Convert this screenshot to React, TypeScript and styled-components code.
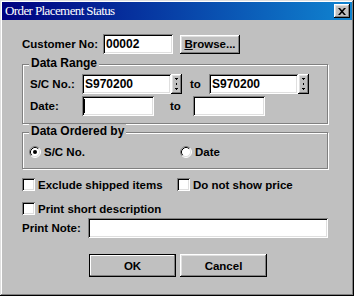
import React from 'react'
import styled, { createGlobalStyle } from 'styled-components'

const GlobalStyle = createGlobalStyle`
    html, body {
        margin: 0;
        padding: 0;
        background: #c0c0c0;
    }
    body {
        font-family: "Liberation Sans", Arial, sans-serif;
        color: #000;
    }
`

const raised = `
    box-shadow: inset -1px -1px #000, inset 1px 1px #fff, inset -2px -2px #808080, inset 2px 2px #dfdfdf;
`

const sunken = `
    box-shadow: inset 1px 1px #808080, inset -1px -1px #fff, inset 2px 2px #000, inset -2px -2px #dfdfdf;
`

const Window = styled.div`
    box-sizing: border-box;
    width: 354px;
    height: 296px;
    padding: 2px;
    background: #c0c0c0;
    box-shadow: inset -1px -1px #000, inset 1px 1px #dfdfdf, inset -2px -2px #808080, inset 2px 2px #fff;
`

const TitleBar = styled.div`
    height: 18px;
    display: flex;
    align-items: center;
    justify-content: space-between;
    padding-left: 3px;
    background: linear-gradient(to right, #000080, #1084d0);
`

const TitleText = styled.span`
    font-family: "Liberation Serif", "Times New Roman", serif;
    font-size: 13px;
    letter-spacing: -0.6px;
    color: #fff;
    line-height: 18px;
`

const CloseButton = styled.div`
    width: 16px;
    height: 14px;
    margin-right: 2px;
    display: flex;
    align-items: center;
    justify-content: center;
    background: #c0c0c0;
    ${raised}
`

const Body = styled.div`
    padding: 14px 24px 0 20px;
    font-size: 11.5px;
    font-weight: bold;
`

type RowProps = { $mt?: number; $h?: number; $pl?: number }

const Row = styled.div<RowProps>`
    display: flex;
    align-items: center;
    margin-top: ${({ $mt }) => $mt ?? 0}px;
    padding-left: ${({ $pl }) => $pl ?? 0}px;
    height: ${({ $h }) => $h ?? 20}px;
`

const Label = styled.span<{ $w: number; $ml?: number; $pl?: number }>`
    box-sizing: border-box;
    width: ${({ $w }) => $w}px;
    margin-left: ${({ $ml }) => $ml ?? 0}px;
    padding-left: ${({ $pl }) => $pl ?? 0}px;
    flex: none;
    white-space: nowrap;
`

const TextBox = styled.div<{ $w: number }>`
    box-sizing: border-box;
    width: ${({ $w }) => $w}px;
    height: 20px;
    padding: 0 3px;
    flex: none;
    display: flex;
    align-items: center;
    background: #fff;
    font-size: 12px;
    font-weight: bold;
    ${sunken}
`

const Caret = styled.span`
    width: 1px;
    height: 14px;
    margin-left: -1px;
    background: #000;
`

const PushButton = styled.div<{ $w: number; $h: number; $ml?: number; $default?: boolean }>`
    box-sizing: border-box;
    width: ${({ $w }) => $w}px;
    height: ${({ $h }) => $h}px;
    margin-left: ${({ $ml }) => $ml ?? 0}px;
    flex: none;
    display: flex;
    align-items: center;
    justify-content: center;
    background: #c0c0c0;
    border: ${({ $default }) => ($default ? '1px solid #000' : 'none')};
    ${({ $default }) =>
        $default
            ? 'box-shadow: inset -1px -1px #808080, inset 1px 1px #fff;'
            : raised}
`

const Spinner = styled.div`
    box-sizing: border-box;
    width: 11px;
    height: 20px;
    flex: none;
    display: flex;
    align-items: center;
    justify-content: center;
    background: #c0c0c0;
    ${raised}
`

const GroupBox = styled.div<{ $mt: number; $pad: string }>`
    position: relative;
    margin-top: ${({ $mt }) => $mt}px;
    padding: ${({ $pad }) => $pad};
    border: 1px solid #808080;
    box-shadow: 1px 1px 0 #fff, inset 1px 1px 0 #fff;
`

const Legend = styled.span`
    position: absolute;
    top: -9px;
    left: 6px;
    padding: 0 2px;
    line-height: 15px;
    font-size: 12px;
    background: #c0c0c0;
`

const OptionItem = styled.div<{ $w?: number }>`
    display: flex;
    align-items: center;
    gap: 3px;
    width: ${({ $w }) => ($w ? `${$w}px` : 'auto')};
    flex: none;
`

const CheckBox = styled.div`
    box-sizing: border-box;
    width: 13px;
    height: 13px;
    flex: none;
    background: #fff;
    ${sunken}
`

const ChoiceText = styled.span`
    white-space: nowrap;
`

const RadioMark: React.FC<{ checked?: boolean }> = ({ checked }) => (
    <svg width="12" height="12" viewBox="0 0 12 12">
        <circle cx="6" cy="6" r="5" fill="#fff" />
        <path d="M2.11 9.89 A5.5 5.5 0 0 1 9.89 2.11" fill="none" stroke="#808080" />
        <path d="M9.89 2.11 A5.5 5.5 0 0 1 2.11 9.89" fill="none" stroke="#fff" />
        <path d="M2.82 9.18 A4.5 4.5 0 0 1 9.18 2.82" fill="none" stroke="#000" />
        <path d="M9.18 2.82 A4.5 4.5 0 0 1 2.82 9.18" fill="none" stroke="#dfdfdf" />
        {checked && <circle cx="6" cy="6" r="2" fill="#000" />}
    </svg>
)

const SpinMarks: React.FC = () => (
    <svg width="5" height="16" viewBox="0 0 5 16">
        <path d="M1 2h3v1H1z M2 3h1v1H2z" fill="#000" />
        <path d="M2 7h1v2H2z" fill="#000" />
        <path d="M1 12h3v1H1z M2 13h1v1H2z" fill="#000" />
    </svg>
)

const CloseGlyph: React.FC = () => (
    <svg width="8" height="7" viewBox="0 0 8 7">
        <path d="M0 0h2l2 2.3L6 0h2L5 3.5 8 7H6L4 4.7 2 7H0l3-3.5z" fill="#000" />
    </svg>
)

const Radio: React.FC<{ label: string; checked?: boolean; w?: number }> = ({ label, checked, w }) => (
    <OptionItem $w={w}>
        <RadioMark checked={checked} />
        <ChoiceText>{label}</ChoiceText>
    </OptionItem>
)

const Check: React.FC<{ label: string; w?: number }> = ({ label, w }) => (
    <OptionItem $w={w}>
        <CheckBox />
        <ChoiceText>{label}</ChoiceText>
    </OptionItem>
)

export default function App() {
    return (
        <>
            <GlobalStyle />
            <Window>
                <TitleBar>
                    <TitleText>Order Placement Status</TitleText>
                    <CloseButton><CloseGlyph /></CloseButton>
                </TitleBar>
                <Body>
                    <Row>
                        <Label $w={81}>Customer No:</Label>
                        <TextBox $w={70}>00002</TextBox>
                        <PushButton $w={60} $h={19} $ml={7}>
                            <span><u>B</u>rowse...</span>
                        </PushButton>
                    </Row>

                    <GroupBox $mt={10} $pad="9px 0 7px 7px">
                        <Legend>Data Range</Legend>
                        <Row>
                            <Label $w={52}>S/C No.:</Label>
                            <TextBox $w={89}>S970200</TextBox>
                            <Spinner><SpinMarks /></Spinner>
                            <Label $w={19} $ml={8}>to</Label>
                            <TextBox $w={89}>S970200</TextBox>
                            <Spinner><SpinMarks /></Spinner>
                        </Row>
                        <Row $mt={2}>
                            <Label $w={52}>Date:</Label>
                            <TextBox $w={72}><Caret /></TextBox>
                            <Label $w={39} $pl={16}>to</Label>
                            <TextBox $w={72} />
                        </Row>
                    </GroupBox>

                    <GroupBox $mt={8} $pad="12px 0 9px 6px">
                        <Legend>Data Ordered by</Legend>
                        <Row $h={14}>
                            <Radio label="S/C No." checked w={151} />
                            <Radio label="Date" />
                        </Row>
                    </GroupBox>

                    <Row $mt={9} $h={13}>
                        <Check label="Exclude shipped items" w={155} />
                        <Check label="Do not show price" />
                    </Row>
                    <Row $mt={11} $h={13}>
                        <Check label="Print short description" />
                    </Row>

                    <Row $mt={3}>
                        <Label $w={66}>Print Note:</Label>
                        <TextBox $w={240} />
                    </Row>

                    <Row $mt={16} $h={23} $pl={67}>
                        <PushButton $w={87} $h={23} $default>OK</PushButton>
                        <PushButton $w={87} $h={23} $ml={4}>Cancel</PushButton>
                    </Row>
                </Body>
            </Window>
        </>
    )
}
